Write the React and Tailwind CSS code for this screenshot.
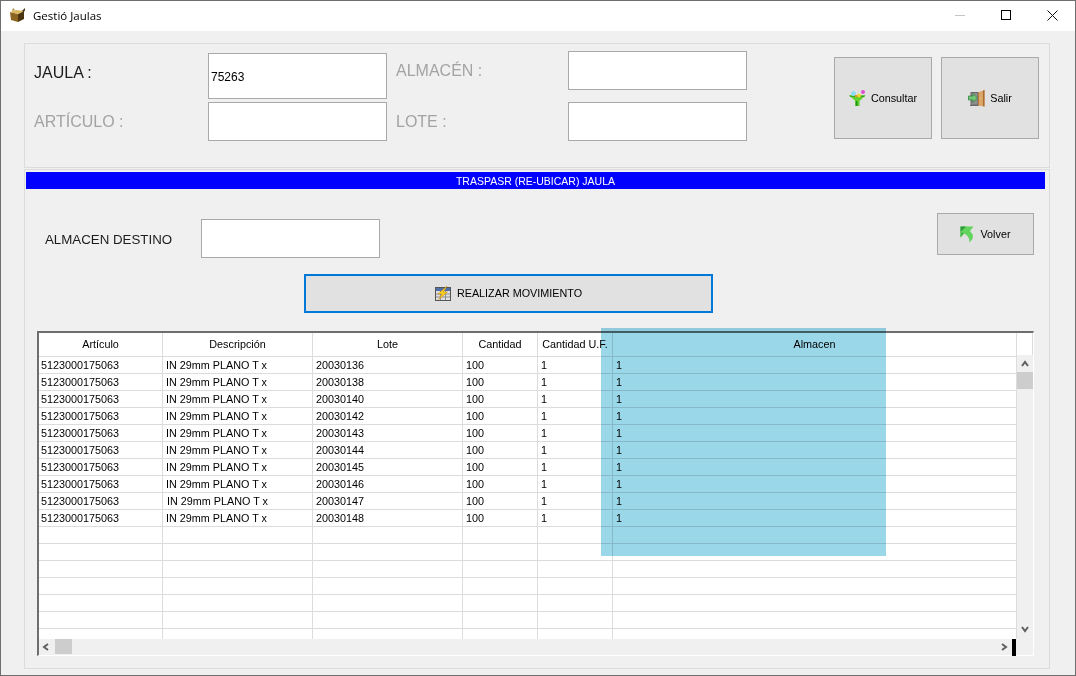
const sans = "font-['Liberation_Sans',Arial,sans-serif]"

const lotes = ['20030136', '20030138', '20030140', '20030142', '20030143', '20030144', '20030145', '20030146', '20030147', '20030148']
const widths = ['w-[124px]', 'w-[150px]', 'w-[150px]', 'w-[75px]', 'w-[75px]', 'flex-1']
const headers = ['Artículo', 'Descripción', 'Lote', 'Cantidad', 'Cantidad U.F.', 'Almacen']
const rows = [...lotes.map((l) => ['5123000175063', 'IN 29mm PLANO T x', l, '100', '1', '1']), ...Array(7).fill(['', '', '', '', '', ''])]

function BoxIcon() {
  return (
    <svg width="17" height="15" viewBox="0 0 17 15">
      <path d="M1 4 L9 6 L9 14 L2 12 Z" fill="#8a6420" />
      <path d="M9 6 L15 3 L15 11 L9 14 Z" fill="#4a3510" />
      <path d="M1 4 L7 2 L15 3 L9 6 Z" fill="#d9b75a" />
      <path d="M13 3 L16 0 L16 2 L15 4 Z" fill="#3a2a0c" />
      <path d="M6 2 L4 0 L3 3 Z" fill="#a88a3a" />
    </svg>
  )
}

function FunnelIcon() {
  return (
    <svg width="17" height="16" viewBox="0 0 17 16">
      <path d="M0 5.5 L16.5 5.5 L10.5 11 L10.5 16 L6.5 16 L6.5 11 Z" fill="#5fd02c" />
      <path d="M6.5 11 L8.5 11 L8.5 16 L6.5 16 Z" fill="#1f9a10" />
      <path d="M0 5.5 L16.5 5.5 L15 7 L1.5 7 Z" fill="#3aa81c" />
      <circle cx="4.5" cy="3.5" r="2.5" fill="#8edcf2" />
      <circle cx="10" cy="5.5" r="2" fill="#f2d23a" />
      <circle cx="14" cy="2" r="2" fill="#e04fd0" />
      <rect x="6" y="5" width="2" height="2" fill="#e58a2a" />
    </svg>
  )
}

function DoorIcon() {
  return (
    <svg width="17" height="17" viewBox="0 0 17 17">
      <rect x="3" y="2.5" width="7" height="12.5" fill="#8f8f8f" stroke="#666" />
      <rect x="2" y="15" width="9" height="1" fill="#6b6b6b" />
      <path d="M10 2.5 L16.5 0 L16.5 16.5 L10 15.5 Z" fill="#dba468" />
      <path d="M15 0.6 L16.5 0 L16.5 16.5 L15 16.3 Z" fill="#a86c30" />
      <rect x="10" y="2.5" width="1" height="13" fill="#b87a3c" />
      <rect x="12" y="8" width="1" height="1" fill="#f5d76a" />
      <path d="M0.5 6 L5 6 L5 3.5 L9.5 8 L5 12.5 L5 10 L0.5 10 Z" fill="#72c476" stroke="#2f7d36" strokeWidth="0.7" />
    </svg>
  )
}

function BackIcon() {
  return (
    <svg width="14" height="17" viewBox="0 0 14 17">
      <path d="M0.5 0.5 L13.5 0.5 L10 5 L13 9 L12.5 13 L9.5 16.5 L9 12.5 L7 9.5 L4 7.5 L0.5 11.5 Z" fill="#62d45e" />
      <path d="M0.5 0.5 L6 0.5 L0.5 6 Z" fill="#2f9a38" />
      <path d="M0.5 6 L4 7.5 L0.5 11.5 Z" fill="#45b548" />
    </svg>
  )
}

function MoveIcon() {
  return (
    <svg width="16" height="15" viewBox="0 0 16 15">
      <rect x="0.5" y="1.5" width="15" height="13" fill="#e0e0e0" stroke="#555" />
      <rect x="1" y="2" width="14" height="3" fill="#4f6fa8" />
      <path d="M1 8 H15 M1 11 H15 M5.5 5 V14 M10.5 5 V14" stroke="#8f8f8f" />
      <path d="M12 0 L3 8 L7 8 L3.5 13.5 L12.5 6 L8.5 6 Z" fill="#f8cf20" stroke="#c88a0a" strokeWidth="0.5" />
    </svg>
  )
}

function Chevron({ d }) {
  return (
    <svg width="8" height="8" viewBox="0 0 8 8">
      <path d={d} fill="none" stroke="#606060" strokeWidth="2" />
    </svg>
  )
}

function Field({ className, children }) {
  return (
    <div className={`flex items-center w-[179px] border border-[#a9a9a9] bg-white pl-[2px] pt-[1px] text-[12px] text-black ${className}`}>
      {children}
    </div>
  )
}

function Button({ className, children }) {
  return (
    <button className={`flex items-center justify-center border border-[#a9a9a9] bg-[#e1e1e1] text-[10.8px] text-black ${className}`}>
      {children}
    </button>
  )
}

export default function App() {
  return (
    <div className={`flex flex-col w-[1076px] h-[676px] overflow-hidden border border-[#6e6e6e] bg-[#f0f0f0] ${sans}`}>
      {/* title bar */}
      <div className="flex items-center h-[30px] shrink-0 bg-white">
        <div className="ml-[8px] mb-[1px]"><BoxIcon /></div>
        <span className="ml-[7px] text-[11.5px] text-black font-['Open_Sans',sans-serif]">Gestió Jaulas</span>
        <div className="ml-auto flex mb-[2px]">
          <div className="flex items-center justify-center w-[46px] h-[16px]">
            <div className="w-[10px] h-px bg-[#c4c4c4]" />
          </div>
          <div className="flex items-center justify-center w-[46px] h-[16px]">
            <div className="w-[10px] h-[10px] border border-black" />
          </div>
          <div className="flex items-center justify-center w-[46px] h-[16px]">
            <svg width="11" height="11" viewBox="0 0 11 11">
              <path d="M0.5 0.5 L10.5 10.5 M10.5 0.5 L0.5 10.5" stroke="#111" />
            </svg>
          </div>
        </div>
      </div>

      {/* search panel */}
      <div className="flex shrink-0 ml-[23px] mt-[12px] w-[1026px] h-[125px] border border-[#dcdcdc] text-[16px] text-[#a3a3a3]">
        <div className="flex flex-col gap-[3px] ml-[9px] mt-[9px]">
          <div className="flex items-center">
            <span className="w-[174px] mb-[7px] text-[#1c1c1c]">JAULA :</span>
            <Field className="h-[46px]">75263</Field>
          </div>
          <div className="flex items-center">
            <span className="w-[174px]">ARTÍCULO :</span>
            <Field className="h-[39px]" />
          </div>
        </div>
        <div className="flex flex-col gap-[12px] ml-[9px] mt-[7px]">
          <div className="flex items-center">
            <span className="w-[172px]">ALMACÉN :</span>
            <Field className="h-[39px]" />
          </div>
          <div className="flex items-center">
            <span className="w-[172px]">LOTE :</span>
            <Field className="h-[39px]" />
          </div>
        </div>
        <div className="flex gap-[9px] ml-[87px] mt-[13px]">
          <Button className="gap-[5px] w-[98px] h-[82px]"><FunnelIcon />Consultar</Button>
          <Button className="gap-[5px] w-[98px] h-[82px]"><DoorIcon />Salir</Button>
        </div>
      </div>

      {/* traspaso panel */}
      <div className="flex flex-col shrink-0 ml-[23px] mt-[1px] w-[1026px] h-[500px] border border-[#dcdcdc]">
        <div className="ml-px mt-[2px] w-[1019px] h-[17px] bg-[#0000ff] text-center text-[10.5px] leading-[18px] text-white">
          TRASPASR (RE-UBICAR) JAULA
        </div>

        <div className="flex items-start mt-[24px] h-[44px]">
          <span className="ml-[20px] mt-[17px] w-[156px] text-[13.3px] text-[#1c1c1c]">ALMACEN DESTINO</span>
          <Field className="mt-[6px] h-[39px]" />
          <Button className="ml-auto mr-[15px] gap-[6px] w-[97px] h-[42px]"><BackIcon />Volver</Button>
        </div>

        <button className="flex items-center justify-center gap-[6px] ml-[279px] mt-[17px] w-[409px] h-[39px] border-2 border-[#0078d7] bg-[#e1e1e1] text-[10.8px] text-black">
          <MoveIcon />REALIZAR MOVIMIENTO
        </button>

        {/* grid */}
        <div className="relative flex ml-[12px] mt-[18px] w-[997px] h-[325px] border-t-2 border-l-2 border-r border-b border-t-[#6e6e6e] border-l-[#6e6e6e] border-r-white border-b-white text-[10.8px] text-black">
          <div className="flex flex-col w-[978px]">
            <div className="flex flex-col h-[306px] overflow-hidden bg-white">
              <div className="flex shrink-0 h-[24px] border-b border-[#dcdcdc]">
                {headers.map((h, i) => (
                  <div key={h} className={`flex items-center justify-center border-r border-[#dcdcdc] ${widths[i]}`}>{h}</div>
                ))}
              </div>
              {rows.map((row, r) => (
                <div key={r} className="flex shrink-0 h-[17px] border-b border-[#dcdcdc]">
                  {row.map((c, i) => (
                    <div key={i} className={`flex items-center border-r border-[#dcdcdc] whitespace-nowrap ${widths[i]} ${i === 0 ? 'pl-[2px]' : r === 8 && i === 1 ? 'pl-[4px]' : 'pl-[3px]'}`}>{c}</div>
                  ))}
                </div>
              ))}
            </div>
            <div className="flex items-center h-[16px] pl-[3px] bg-[#f0f0f0]">
              <Chevron d="M6 1 L2 4 L6 7" />
              <div className="ml-[5px] mb-px w-[17px] h-[15px] bg-[#cdcdcd]" />
              <div className="ml-auto mr-[4px]"><Chevron d="M2 1 L6 4 L2 7" /></div>
              <div className="mr-px w-[4px] h-[17px] bg-black" />
            </div>
          </div>
          <div className="flex flex-col items-center w-[16px] bg-[#f0f0f0]">
            <div className="w-full h-[22px] bg-white border-r border-[#dcdcdc]" />
            <div className="mt-[5px]"><Chevron d="M1 6 L4 2 L7 6" /></div>
            <div className="mt-[4px] w-full h-[17px] bg-[#cdcdcd]" />
            <div className="mt-[236px]"><Chevron d="M1 2 L4 6 L7 2" /></div>
          </div>

          {/* highlighted selection drawn over the grid */}
          <div className="absolute left-[562px] top-[-5px] w-[285px] h-[228px] bg-[#9ad7e9] mix-blend-multiply" />
        </div>
      </div>
    </div>
  )
}
